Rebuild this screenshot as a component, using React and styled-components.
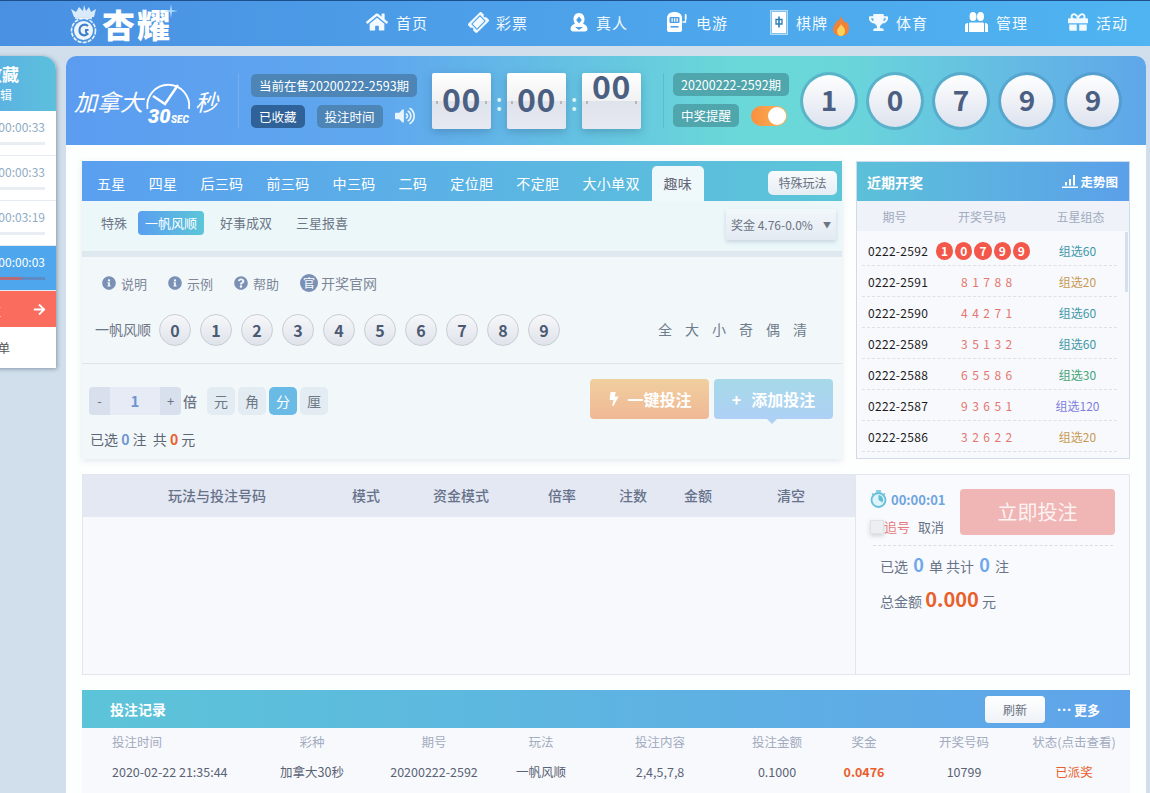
import styled, { createGlobalStyle } from "styled-components";
import { FaHome, FaTicketAlt, FaTrophy, FaGift, FaBolt, FaInfoCircle, FaQuestionCircle, FaVolumeUp, FaArrowRight } from "react-icons/fa";

const navItems = [
  { label: "首页", icon: <FaHome size={22} /> },
  { label: "彩票", icon: <FaTicketAlt size={19} style={{ transform: "rotate(-45deg)" }} /> },
  { label: "真人", icon: <DealerIcon /> },
  { label: "电游", icon: <SlotIcon /> },
  { label: "棋牌", icon: <TileIcon />, hot: true },
  { label: "体育", icon: <FaTrophy size={19} /> },
  { label: "管理", icon: <UsersIcon /> },
  { label: "活动", icon: <FaGift size={20} /> },
];

const playTabs = ["五星", "四星", "后三码", "前三码", "中三码", "二码", "定位胆", "不定胆", "大小单双"];
const openRows = [
  ["0222-2591", "8 1 7 8 8", "组选20", "#c89a55"],
  ["0222-2590", "4 4 2 7 1", "组选60", "#3f98a8"],
  ["0222-2589", "3 5 1 3 2", "组选60", "#3f98a8"],
  ["0222-2588", "6 5 5 8 6", "组选30", "#45a377"],
  ["0222-2587", "9 3 6 5 1", "组选120", "#7f7fdc"],
  ["0222-2586", "3 2 6 2 2", "组选20", "#c89a55"],
];
const betHead = ["玩法与投注号码", "模式", "资金模式", "倍率", "注数", "金额", "清空"];
const recordHead = ["投注时间", "彩种", "期号", "玩法", "投注内容", "投注金额", "奖金", "开奖号码", "状态(点击查看)"];

function DealerIcon() {
  return (
    <svg width="18" height="19" viewBox="0 0 18 19">
      <path d="M9 0c3.600 0 5.500 2.800 5.500 6 0 2-.6 3.600-1.500 4.800 2.500.8 4.500 2.600 4.500 5.200 0 1.500-1 2.500-2.500 2.500h-12C2 18.500 .5 17.500 .5 16c0-2.600 2-4.400 4.500-5.200C4.100 9.600 3.500 8 3.500 6 3.500 2.800 5.400 0 9 0z" fill="#fff" />
      <path d="M9 3.500 11.800 7 9 10.500 6.200 7z" fill="#4a9fe6" />
      <path d="M5 14h8l-4 3z" fill="#4a9fe6" />
    </svg>
  );
}

function SlotIcon() {
  return (
    <svg width="22" height="22" viewBox="0 0 22 22">
      <path d="M8.500 1C12.500 1 16 3 16 7v12c0 1.200-.8 2-2 2H3c-1.200 0-2-.8-2-2V7c0-4 3.500-6 7.500-6z" fill="#fff" />
      <rect x="3.500" y="6" width="10" height="6" rx="1" fill="#4a9fe6" />
      <path d="M5.500 7.200h1.300v3.500H5.500zM8 7.200h1.300v3.500H8zM10.500 7.200h1.300v3.500h-1.300z" fill="#fff" />
      <rect x="4.500" y="15" width="8" height="1.600" fill="#4a9fe6" />
      <rect x="18.800" y="3" width="1.800" height="6" rx=".9" fill="#fff" />
      <path d="M16.500 11h3v-2" fill="none" stroke="#fff" strokeWidth="1.300" />
    </svg>
  );
}

function TileIcon() {
  return (
    <svg width="18" height="25" viewBox="0 0 18 25">
      <rect x=".5" y=".5" width="17" height="24" fill="#7fc0ee" stroke="#b5dcf7" />
      <rect x="2" y="2" width="14" height="21" fill="#fff" />
      <path d="M6 9.500h6v4.500H6z" fill="none" stroke="#2d7fb8" strokeWidth="1.300" />
      <path d="M9 6.500v11" stroke="#2d7fb8" strokeWidth="1.600" />
    </svg>
  );
}

function FlameIcon() {
  return (
    <svg width="16" height="20" viewBox="0 0 16 20">
      <path d="M8 0c1 3 2 4 3.500 6 1 1.300 1.500 1 2-.5C15.500 8 16 10.500 16 13c0 4.500-3.500 7-8 7s-8-2.500-8-7c0-3 2-5 3.500-7C5.500 4 7.500 3 8 0z" fill="#f2813a" />
      <path d="M8 8c1 2 4 3.500 4 7 0 2.800-2 5-4 5s-4-2-4-5c0-2.500 3-4 4-7z" fill="#fbd35c" />
    </svg>
  );
}

function UsersIcon() {
  return (
    <svg width="23" height="20" viewBox="0 0 23 20" fill="#fff">
      <ellipse cx="8" cy="4.500" rx="3.500" ry="4.500" />
      <ellipse cx="15.500" cy="4.500" rx="3.500" ry="4.500" />
      <path d="M5.500 10.500h12c1 0 1.500.5 1.500 1.500v8H4v-8c0-1 .5-1.500 1.500-1.500z" />
      <path d="M0 20v-6c0-2 1-3 3-3v9zM23 20v-6c0-2-1-3-3-3v9z" />
    </svg>
  );
}

function Emblem() {
  return (
    <svg width="31" height="40" viewBox="0 0 31 40">
      <path d="M6 13 3 5l5 3 3-5 4 4 1-6 2 6 3-4 2 5 5-3-2 8z" fill="#d9ebf9" />
      <path d="M7 14h17" stroke="#fff" strokeWidth="1.500" />
      <circle cx="15.500" cy="26.500" r="12" fill="none" stroke="#eaf4fc" strokeWidth="1.600" strokeDasharray="4 1.200" />
      <circle cx="15.500" cy="26.500" r="9.500" fill="#eef6fc" />
      <path d="M20 22c-2.500-2.500-8-1.500-8.500 3.500S16 33 19.500 30c-1.500-1-2-2-1.500-4h2.500" fill="none" stroke="#3f7fca" strokeWidth="2" />
    </svg>
  );
}

function SparkIcon() {
  return (
    <svg width="14" height="14" viewBox="0 0 14 14" fill="#a6dafc">
      <path d="M7 0 8 6 14 7 8 8 7 14 6 8 0 7 6 6z" />
    </svg>
  );
}

function SpeedClock() {
  return (
    <svg width="50" height="50" viewBox="0 0 50 50">
      <path d="M3.500 33A21 21 0 1 1 45 33" fill="none" stroke="#fff" strokeWidth="1.800" />
      <path d="M9 20l12 8L34 9" fill="none" stroke="#fff" strokeWidth="2.400" />
      <text x="4" y="47" fill="#fff" fontSize="20" fontWeight="900" fontStyle="italic" fontFamily="Roboto, sans-serif">30</text>
      <text x="27" y="47" fill="#fff" fontSize="10" fontWeight="900" fontStyle="italic" fontFamily="Roboto, sans-serif">SEC</text>
    </svg>
  );
}

function TimerIcon() {
  return (
    <svg width="17" height="18" viewBox="0 0 17 18">
      <circle cx="8.500" cy="10" r="7" fill="#dff3f8" stroke="#64c0d8" strokeWidth="1.800" />
      <path d="M8.500 10V5a5 5 0 0 1 4 7.500z" fill="#64c0d8" />
      <path d="M6 1h5M2 3.500l2 1.500M15 3.500 13 5" stroke="#64c0d8" strokeWidth="1.500" />
    </svg>
  );
}

function TrendIcon() {
  return (
    <svg width="16" height="13" viewBox="0 0 16 13" fill="#fff">
      <path d="M0 11.500h16V13H0zM3 7h2v3.500H3zM7 4h2v6.500H7zM11 0h2v10.500h-2z" />
    </svg>
  );
}

const App = () => {
  return (
    <>
      <GlobalStyle />
      <Header>
        <Brand>
          <Emblem />
          <BrandText>杏耀</BrandText>
          <Spark><SparkIcon /></Spark>
        </Brand>
        <Nav>
          {navItems.map((item) => (
            <NavItem key={item.label}>
              {item.icon}
              <span>{item.label}</span>
              {item.hot && <Flame><FlameIcon /></Flame>}
            </NavItem>
          ))}
        </Nav>
      </Header>

      <Page>
        <Sidebar>
          <SideHead>
            <SideTitle>我的收藏</SideTitle>
            <SideSub>点击编辑</SideSub>
          </SideHead>
          <SideRow>
            <SideTime>00:00:33</SideTime>
            <SideBar />
          </SideRow>
          <SideRow>
            <SideTime>00:00:33</SideTime>
            <SideBar />
          </SideRow>
          <SideRow>
            <SideTime>00:03:19</SideTime>
            <SideBar />
          </SideRow>
          <SideRow $active>
            <SideTime $active>00:00:03</SideTime>
            <SideBar $active><i style={{ width: "78%" }} /></SideBar>
          </SideRow>
          <SideGo>
            <span>去投注</span>
            <FaArrowRight size={13} />
          </SideGo>
          <SideFoot>我的注单</SideFoot>
        </Sidebar>

        <Main>
          <Banner>
            <GameLogo>
              <GameName>加拿大</GameName>
              <SpeedClock />
              <GameName>秒</GameName>
            </GameLogo>
            <BannerCol>
              <Tag>当前在售20200222-2593期</Tag>
              <TagRow>
                <Tag $dark>已收藏</Tag>
                <Tag>投注时间</Tag>
                <FaVolumeUp size={20} color="#e8f4fb" />
              </TagRow>
            </BannerCol>
            <Flips>
              <FlipCard>00</FlipCard>
              <Colon>:</Colon>
              <FlipCard>00</FlipCard>
              <Colon>:</Colon>
              <FlipCard $up>00</FlipCard>
            </Flips>
            <BannerColRight>
              <Tag $teal>20200222-2592期</Tag>
              <TagRow>
                <Tag $teal>中奖提醒</Tag>
                <Toggle />
              </TagRow>
            </BannerColRight>
            <BigBalls>
              {[1, 0, 7, 9, 9].map((n, i) => (
                <BigBall key={i}>{n}</BigBall>
              ))}
            </BigBalls>
          </Banner>

          <Content>
            <TopRow>
              <PlayPanel>
                <TabBar>
                  {playTabs.map((t) => (
                    <Tab key={t}>{t}</Tab>
                  ))}
                  <ActiveTab>趣味</ActiveTab>
                  <SpecialBtn>特殊玩法</SpecialBtn>
                </TabBar>
                <SubBar>
                  <SubLabel>特殊</SubLabel>
                  <SubPill>一帆风顺</SubPill>
                  <SubItem>好事成双</SubItem>
                  <SubItem>三星报喜</SubItem>
                  <PrizeSelect>
                    <span>奖金 4.76-0.0%</span>
                    <small>▼</small>
                  </PrizeSelect>
                </SubBar>
                <PickArea>
                  <Links>
                    <LinkItem><FaInfoCircle size={14} />说明</LinkItem>
                    <LinkItem><FaInfoCircle size={14} />示例</LinkItem>
                    <LinkItem><FaQuestionCircle size={14} />帮助</LinkItem>
                    <LinkItem $tight><Guan>官</Guan>开奖官网</LinkItem>
                  </Links>
                  <NumberRow>
                    <RowLabel>一帆风顺</RowLabel>
                    <Balls>
                      {[0, 1, 2, 3, 4, 5, 6, 7, 8, 9].map((n) => (
                        <PickBall key={n}>{n}</PickBall>
                      ))}
                    </Balls>
                    <Quick>
                      {["全", "大", "小", "奇", "偶", "清"].map((q) => (
                        <span key={q}>{q}</span>
                      ))}
                    </Quick>
                  </NumberRow>
                </PickArea>
                <Controls>
                  <ControlLeft>
                    <StepRow>
                      <Stepper>
                        <StepBtn>-</StepBtn>
                        <StepValue>1</StepValue>
                        <StepBtn>+</StepBtn>
                      </Stepper>
                      <Times>倍</Times>
                      <Units>
                        {["元", "角", "分", "厘"].map((u) => (
                          <Unit key={u} $on={u === "分"}>{u}</Unit>
                        ))}
                      </Units>
                    </StepRow>
                    <Summary>已选 <b>0</b> 注&nbsp;&nbsp;共 <em>0</em> 元</Summary>
                  </ControlLeft>
                  <BigBtns>
                    <QuickBet><FaBolt size={14} />一键投注</QuickBet>
                    <AddBet><span>+</span>添加投注</AddBet>
                  </BigBtns>
                </Controls>
              </PlayPanel>

              <RecentPanel>
                <RecentHead>
                  <span>近期开奖</span>
                  <TrendLink><TrendIcon />走势图</TrendLink>
                </RecentHead>
                <RecentCols>
                  <span>期号</span>
                  <span>开奖号码</span>
                  <span>五星组态</span>
                </RecentCols>
                <RecentList>
                  <Scroll />
                  <RecentRow>
                    <Issue>0222-2592</Issue>
                    <RedBalls>
                      {[1, 0, 7, 9, 9].map((n, i) => (
                        <RedBall key={i}>{n}</RedBall>
                      ))}
                    </RedBalls>
                    <Kind $color="#3f98a8">组选60</Kind>
                  </RecentRow>
                  {openRows.map(([issue, nums, kind, color]) => (
                    <RecentRow key={issue}>
                      <Issue>{issue}</Issue>
                      <OpenNums>{nums}</OpenNums>
                      <Kind $color={color}>{kind}</Kind>
                    </RecentRow>
                  ))}
                </RecentList>
              </RecentPanel>
            </TopRow>

            <BetPanel>
              <BetList>
                <BetHead>
                  {betHead.map((h) => (
                    <span key={h}>{h}</span>
                  ))}
                </BetHead>
              </BetList>
              <BetSide>
                <SubmitRow>
                  <SubmitLeft>
                    <Countdown><TimerIcon />00:00:01</Countdown>
                    <ChaseRow>
                      <Check />
                      <Chase>追号</Chase>
                      <Cancel>取消</Cancel>
                    </ChaseRow>
                  </SubmitLeft>
                  <SubmitBtn>立即投注</SubmitBtn>
                </SubmitRow>
                <DashLine />
                <Totals>已选 <BlueNum>0</BlueNum> 单 共计 <BlueNum>0</BlueNum> 注</Totals>
                <Totals $gap>总金额 <Money>0.000</Money> 元</Totals>
              </BetSide>
            </BetPanel>

            <Records>
              <RecordHead>
                <span>投注记录</span>
                <RecordTools>
                  <Refresh>刷新</Refresh>
                  <More><i>···</i>更多</More>
                </RecordTools>
              </RecordHead>
              <RecordGrid $head>
                {recordHead.map((h) => (
                  <span key={h}>{h}</span>
                ))}
              </RecordGrid>
              <RecordGrid>
                <span>2020-02-22 21:35:44</span>
                <span>加拿大30秒</span>
                <span>20200222-2592</span>
                <span>一帆风顺</span>
                <span>2,4,5,7,8</span>
                <span>0.1000</span>
                <Prize>0.0476</Prize>
                <span>10799</span>
                <Paid>已派奖</Paid>
              </RecordGrid>
            </Records>
          </Content>
        </Main>
      </Page>
    </>
  );
};

const GlobalStyle = createGlobalStyle`
  html, body {
    margin: 0;
    height: 100%;
    overflow: hidden;
    background: #d0dfeb;
    font-family: "Noto Sans CJK SC", "Noto Sans", sans-serif;
  }
  * { box-sizing: border-box; }
`;

const Header = styled.header`
  height: 46px;
  border-top: 1px solid #1d4f8c;
  background: linear-gradient(90deg, #4a90e2, #4fb4f1);
  display: flex;
  align-items: center;
  color: #fff;
`;

const Brand = styled.div`
  position: relative;
  margin-left: 68px;
  display: flex;
  align-items: center;
  gap: 3px;
`;

const BrandText = styled.div`
  font-size: 33px;
  line-height: 40px;
  font-weight: 900;
  letter-spacing: 2px;
`;

const Spark = styled.span`
  position: absolute;
  right: -6px;
  top: 0;
  line-height: 0;
`;

const Nav = styled.nav`
  margin-left: auto;
  padding-right: 23px;
  display: flex;
`;

const NavItem = styled.div`
  position: relative;
  width: 100px;
  padding-bottom: 3px;
  display: flex;
  justify-content: flex-end;
  align-items: center;
  gap: 8px;
  font-size: 15px;
  color: #f2f9ff;
  span { letter-spacing: 1px; margin-right: -1px; }
`;

const Flame = styled.span`
  position: absolute;
  right: -21px;
  top: 6px;
`;

const Page = styled.div`
  display: flex;
  align-items: flex-start;
  margin-left: -64px;
  padding-top: 10px;
`;

const Sidebar = styled.aside`
  width: 120px;
  flex: none;
  background: #fff;
  border-radius: 0 14px 0 0;
  box-shadow: 1px 1px 4px rgba(60, 80, 110, .5);
`;

const SideHead = styled.div`
  height: 55px;
  padding: 7px 37px 0 0;
  border-radius: 0 14px 0 0;
  background: linear-gradient(90deg, #5ba4e8, #5cc0dc);
  color: #fff;
  text-align: right;
`;

const SideTitle = styled.div`
  font-size: 17px;
  line-height: 22px;
  font-weight: 700;
`;

const SideSub = styled.div`
  font-size: 12px;
  line-height: 20px;
  margin-right: 7px;
`;

const SideRow = styled.div`
  height: 45px;
  padding: 7px 11px 0 0;
  border-bottom: 1px solid #e6ebf1;
  background: ${(p) => (p.$active ? "#4ea6ec" : "#fff")};
`;

const SideTime = styled.div`
  font-size: 12px;
  line-height: 18px;
  text-align: right;
  color: ${(p) => (p.$active ? "#fff" : "#8fabc4")};
`;

const SideBar = styled.div`
  margin-top: 6px;
  height: 3px;
  background: ${(p) => (p.$active ? "#5d8cc4" : "#e8eef4")};
  i { display: block; height: 100%; background: #ba6a74; }
`;

const SideGo = styled.div`
  height: 36px;
  padding: 0 10px 0 26px;
  display: flex;
  align-items: center;
  justify-content: space-between;
  background: #fa6c5e;
  color: #fff;
  font-size: 13px;
`;

const SideFoot = styled.div`
  height: 41px;
  padding-right: 46px;
  display: flex;
  align-items: center;
  justify-content: flex-end;
  font-size: 12px;
  color: #555;
`;

const Main = styled.main`
  width: 1080px;
  flex: none;
  margin-left: 10px;
  min-height: 760px;
  background: #fdfefe;
  border-radius: 10px 10px 0 0;
`;

const Banner = styled.section`
  height: 89px;
  border-radius: 10px 10px 0 0;
  background: linear-gradient(90deg, #5b9cf0 0%, #5fa8ee 30%, #6ad8d8 62%, #6ad6da 72%, #5fa6ea 100%);
  display: flex;
  align-items: center;
  color: #fff;
`;

const GameLogo = styled.div`
  width: 173px;
  height: 55px;
  padding-left: 8px;
  display: flex;
  align-items: center;
  border-right: 1px solid rgba(255, 255, 255, .15);
  svg { margin: 0 1px 0 1px; }
`;

const GameName = styled.span`
  font-size: 23px;
  font-style: italic;
  font-weight: 400;
  white-space: nowrap;
`;

const BannerCol = styled.div`
  margin-left: 12px;
  width: 181px;
  display: flex;
  flex-direction: column;
  gap: 8px;
`;

const BannerColRight = styled(BannerCol)`
  margin-left: 22px;
  padding-left: 9px;
  width: 124px;
  height: 55px;
  border-left: 1px solid rgba(60, 150, 170, .3);
`;

const TagRow = styled.div`
  display: flex;
  align-items: center;
  gap: 12px;
`;

const Tag = styled.div`
  height: 23px;
  padding: 0 8px;
  border-radius: 5px;
  font-size: 12.5px;
  line-height: 23px;
  white-space: nowrap;
  width: fit-content;
  background: ${(p) => (p.$dark ? "#2e6298" : p.$teal ? "#4fa6ad" : "#4c85b6")};
`;

const Toggle = styled.div`
  position: relative;
  width: 36px;
  height: 20px;
  border-radius: 10px;
  background: linear-gradient(90deg, #fb8f3e, #f7b65a);
  &::after {
    content: "";
    position: absolute;
    right: 1px;
    top: 1px;
    width: 18px;
    height: 18px;
    border-radius: 50%;
    background: #fff;
  }
`;

const Flips = styled.div`
  display: flex;
  align-items: center;
`;

const FlipCard = styled.div`
  position: relative;
  width: 59px;
  height: 56px;
  border-radius: 2px;
  background: linear-gradient(#fff 0, #f1f1f3 50%, #dfe3ec 50%, #e7e9f2 100%);
  box-shadow: 0 3px 8px rgba(50, 90, 130, .35);
  color: #4b5f82;
  font-size: 32px;
  font-weight: 700;
  text-align: center;
  letter-spacing: .5px;
  line-height: ${(p) => (p.$up ? "25px" : "51px")};
  &::after {
    content: "";
    position: absolute;
    left: 4px;
    right: 4px;
    top: 28px;
    height: 3px;
    border-left: 2px solid #b8b8b8;
    border-right: 2px solid #b8b8b8;
  }
`;

const Colon = styled.div`
  width: 16px;
  text-align: center;
  font-size: 24px;
  font-weight: 500;
  line-height: 24px;
  color: #dff6f8;
`;

const BigBalls = styled.div`
  margin-left: 13px;
  display: flex;
  gap: 8px;
`;

const BigBall = styled.div`
  width: 58px;
  height: 58px;
  padding-bottom: 4px;
  border-radius: 50%;
  border: 3px solid rgba(70, 140, 180, .45);
  background: linear-gradient(#fff, #dde2ee);
  background-clip: padding-box;
  display: flex;
  align-items: center;
  justify-content: center;
  font-size: 28px;
  font-weight: 700;
  color: #4b5f82;
`;

const Content = styled.div`
  padding: 16px 16px 0;
`;

const TopRow = styled.div`
  display: flex;
  gap: 14px;
  align-items: flex-start;
`;

const PlayPanel = styled.section`
  width: 760px;
  height: 298px;
  background: #f2f7fa;
  box-shadow: 0 2px 6px rgba(150, 170, 190, .25);
`;

const TabBar = styled.div`
  height: 40px;
  padding-left: 15px;
  display: flex;
  align-items: flex-end;
  gap: 23px;
  position: relative;
  background: linear-gradient(90deg, #5a9ff0, #5cc6d8);
`;

const Tab = styled.div`
  height: 35px;
  color: #fff;
  font-size: 14px;
  line-height: 34px;
  letter-spacing: .35px;
`;

const ActiveTab = styled(Tab)`
  width: 52px;
  margin-left: -11px;
  border-radius: 5px 5px 0 0;
  background: #eff8fa;
  color: #667;
  text-align: center;
`;

const SpecialBtn = styled.div`
  position: absolute;
  right: 5px;
  top: 10px;
  width: 69px;
  height: 24px;
  border-radius: 5px;
  background: linear-gradient(#f8fbfd, #e6eef4);
  color: #68707f;
  font-size: 12px;
  line-height: 24px;
  text-align: center;
`;

const SubBar = styled.div`
  height: 50px;
  padding: 10px 6px 0 19px;
  display: flex;
  align-items: flex-start;
  background: #ecf7fa;
  font-size: 13px;
  color: #6c7686;
  line-height: 24px;
`;

const SubLabel = styled.div`
  margin-right: 11px;
`;

const SubPill = styled.div`
  width: 66px;
  height: 24px;
  margin-right: 16px;
  border-radius: 4px;
  background: linear-gradient(90deg, #5a9ff0, #5cc6d8);
  color: #fff;
  text-align: center;
`;

const SubItem = styled.div`
  margin-right: 24px;
`;

const PrizeSelect = styled.div`
  margin-left: auto;
  margin-top: -2px;
  width: 110px;
  height: 31px;
  padding: 0 5px;
  display: flex;
  align-items: center;
  justify-content: space-between;
  font-size: 12px;
  color: #6a7484;
  background: linear-gradient(#f1f7fa, #e4eaf2);
  box-shadow: 0 2px 4px rgba(130, 150, 170, .35);
  small { font-size: 8px; }
`;

const PickArea = styled.div`
  height: 113px;
  padding: 15px 0 0 13px;
  border-top: 6px solid #dfe7ef;
  border-bottom: 1px solid #dfe6ea;
`;

const Links = styled.div`
  padding-left: 7px;
  height: 22px;
  display: flex;
  gap: 21px;
`;

const LinkItem = styled.div`
  display: flex;
  align-items: center;
  gap: ${(p) => (p.$tight ? "3px" : "5px")};
  font-size: ${(p) => (p.$tight ? "14px" : "13px")};
  color: #7d8798;
  svg { color: #7a90b5; }
`;

const Guan = styled.span`
  width: 18px;
  height: 18px;
  border-radius: 50%;
  background: #7a90b5;
  color: #fff;
  font-size: 12px;
  line-height: 18px;
  text-align: center;
`;

const NumberRow = styled.div`
  margin-top: 20px;
  display: flex;
  align-items: center;
`;

const RowLabel = styled.div`
  width: 64px;
  font-size: 14px;
  margin-top: -3px;
  color: #6c7686;
`;

const Balls = styled.div`
  display: flex;
  gap: 9px;
`;

const PickBall = styled.div`
  width: 32px;
  height: 32px;
  border-radius: 50%;
  border: 1px solid #c9ced6;
  background: linear-gradient(#f6f7f9, #dfe3ea);
  display: flex;
  align-items: center;
  justify-content: center;
  font-size: 16px;
  font-weight: 700;
  color: #4b5a73;
`;

const Quick = styled.div`
  margin: -2px 0 0 98px;
  display: flex;
  gap: 13px;
  font-size: 14px;
  color: #6f7c8c;
`;

const Controls = styled.div`
  height: 96px;
  padding: 15px 9px 0 7px;
  display: flex;
  justify-content: space-between;
`;

const ControlLeft = styled.div`
  padding-top: 8px;
`;

const StepRow = styled.div`
  display: flex;
  align-items: center;
  height: 28px;
`;

const Stepper = styled.div`
  width: 92px;
  height: 28px;
  display: flex;
  border-radius: 4px;
  overflow: hidden;
  background: #d8dfed;
`;

const StepBtn = styled.div`
  width: 21px;
  text-align: center;
  font-size: 13px;
  line-height: 28px;
  color: #6a7484;
`;

const StepValue = styled.div`
  flex: 1;
  background: #e6ebf6;
  text-align: center;
  font-size: 15px;
  font-weight: 700;
  line-height: 28px;
  color: #6f96d0;
`;

const Times = styled.div`
  margin: 0 10px 0 2px;
  font-size: 14px;
  font-weight: 500;
  color: #6a7484;
`;

const Units = styled.div`
  display: flex;
  gap: 3px;
`;

const Unit = styled.div`
  width: 28px;
  height: 28px;
  border-radius: 5px;
  background: ${(p) => (p.$on ? "#69bbe6" : "#e3ebf3")};
  color: ${(p) => (p.$on ? "#fff" : "#6f7986")};
  font-size: 14px;
  line-height: 28px;
  text-align: center;
`;

const Summary = styled.div`
  margin-top: 14px;
  padding-left: 1px;
  font-size: 14px;
  color: #5d6675;
  b { color: #6f96d0; font-weight: 700; }
  em { color: #e8602c; font-style: normal; font-weight: 700; }
`;

const BigBtns = styled.div`
  display: flex;
  gap: 5px;
`;

const BigBtn = styled.div`
  position: relative;
  width: 119px;
  height: 40px;
  border-radius: 4px;
  display: flex;
  align-items: center;
  justify-content: center;
  gap: 6px;
  color: #fff;
  font-size: 16px;
  font-weight: 700;
`;

const QuickBet = styled(BigBtn)`
  background: linear-gradient(#f0cf9e, #f0b896);
`;

const AddBet = styled(BigBtn)`
  gap: 10px;
  background: linear-gradient(#a6d9e8, #aed0f5);
  &::after {
    content: "";
    position: absolute;
    left: 53px;
    bottom: -5px;
    border: 5px solid transparent;
    border-bottom: 0;
    border-top-color: #aed0f5;
  }
`;

const RecentPanel = styled.aside`
  width: 274px;
  height: 298px;
  border: 1px solid #cfdbe8;
  background: #f8f9fc;
  overflow: hidden;
`;

const RecentHead = styled.div`
  height: 39px;
  padding: 0 11px 0 10px;
  display: flex;
  align-items: center;
  justify-content: space-between;
  background: linear-gradient(90deg, #5cc0d8, #5ba0ea);
  color: #fff;
  font-size: 14px;
  font-weight: 700;
`;

const TrendLink = styled.div`
  display: flex;
  align-items: center;
  gap: 2px;
  font-size: 12.5px;
`;

const RecentCols = styled.div`
  height: 30px;
  display: grid;
  grid-template-columns: 75px 100px 1fr;
  align-items: center;
  text-align: center;
  background: #eff2f8;
  color: #a2abbf;
  font-size: 12px;
`;

const RecentList = styled.div`
  position: relative;
  padding: 4px 12px 0 5px;
`;

const Scroll = styled.div`
  position: absolute;
  right: 1px;
  top: 1px;
  width: 3px;
  height: 60px;
  background: #d6e0ec;
`;

const RecentRow = styled.div`
  height: 31px;
  padding: 1px 0 0 6px;
  display: flex;
  align-items: center;
  border-bottom: 1px dashed #dce1ea;
`;

const Issue = styled.div`
  width: 68px;
  font-size: 12px;
  letter-spacing: .3px;
  color: #1c1c1c;
`;

const RedBalls = styled.div`
  width: 94px;
  display: flex;
  gap: 2px;
`;

const RedBall = styled.div`
  width: 18px;
  height: 18px;
  border-radius: 50%;
  background: #f2574a;
  color: #fff;
  font-size: 12px;
  font-weight: 700;
  line-height: 18px;
  text-align: center;
`;

const OpenNums = styled.div`
  width: 94px;
  padding-left: 25px;
  font-size: 12px;
  letter-spacing: .9px;
  color: #e5756e;
  white-space: pre;
`;

const Kind = styled.div`
  flex: 1;
  padding-left: 8px;
  text-align: center;
  font-size: 12px;
  color: ${(p) => p.$color};
`;

const BetPanel = styled.section`
  margin-top: 15px;
  height: 201px;
  display: flex;
  border: 1px solid #e2e7ef;
`;

const BetList = styled.div`
  width: 773px;
  background: #f8f9fc;
  border-right: 1px solid #e2e7ef;
`;

const BetHead = styled.div`
  height: 42px;
  padding: 0 0 2px 20px;
  display: grid;
  grid-template-columns: 228px 70px 120px 82px 60px 70px 116px;
  align-items: center;
  text-align: center;
  background: #e4e8f3;
  font-size: 14px;
  font-weight: 500;
  color: #66718a;
`;

const BetSide = styled.div`
  flex: 1;
  padding: 14px 14px 0 14px;
  background: #f9fafe;
`;

const SubmitRow = styled.div`
  height: 46px;
  display: flex;
  justify-content: space-between;
`;

const SubmitLeft = styled.div``;

const Countdown = styled.div`
  height: 20px;
  display: flex;
  align-items: center;
  gap: 4px;
  font-size: 13px;
  font-weight: 700;
  color: #6fa5e0;
`;

const ChaseRow = styled.div`
  margin-top: 8px;
  display: flex;
  align-items: center;
  font-size: 13px;
  line-height: 20px;
`;

const Check = styled.div`
  width: 14px;
  height: 14px;
  border: 1px solid #dfe2e8;
  background: #eceef0;
  box-shadow: 0 2px 4px rgba(120, 120, 120, .3);
`;

const Chase = styled.span`
  margin-right: 8px;
  color: #e57b7b;
`;

const Cancel = styled.span`
  color: #667084;
`;

const SubmitBtn = styled.div`
  width: 155px;
  height: 46px;
  border-radius: 4px;
  background: #f0b5b5;
  color: #fdf3f3;
  font-size: 20px;
  line-height: 46px;
  text-align: center;
`;

const DashLine = styled.div`
  margin: 10px 2px 0 3px;
  border-top: 1px dashed #d8dde6;
`;

const Totals = styled.div`
  margin-top: ${(p) => (p.$gap ? "13px" : "7px")};
  padding-left: 10px;
  height: 22px;
  font-size: 14px;
  line-height: 22px;
  color: #687488;
`;

const BlueNum = styled.b`
  font-size: 18px;
  line-height: 22px;
  color: #6fa8ec;
  margin: 0 2px;
`;

const Money = styled.b`
  font-size: 20px;
  line-height: 22px;
  color: #e8602c;
`;

const Records = styled.section`
  margin-top: 15px;
  min-height: 130px;
  background: #f8f9fc;
`;

const RecordHead = styled.div`
  height: 38px;
  padding: 0 30px 0 28px;
  display: flex;
  align-items: center;
  justify-content: space-between;
  background: linear-gradient(90deg, #5cc4d8, #5fa4ea);
  color: #fff;
  font-size: 14px;
  font-weight: 700;
`;

const RecordTools = styled.div`
  display: flex;
  align-items: center;
  gap: 12px;
`;

const Refresh = styled.div`
  width: 60px;
  height: 27px;
  border-radius: 4px;
  background: linear-gradient(#fff, #eef2f7);
  color: #68707f;
  font-size: 12px;
  font-weight: 400;
  line-height: 27px;
  text-align: center;
`;

const More = styled.div`
  display: flex;
  align-items: center;
  gap: 2px;
  font-size: 13px;
  i {
    font-family: "Liberation Sans", sans-serif;
    font-style: normal;
    font-size: 15px;
    letter-spacing: 0;
  }
`;

const RecordGrid = styled.div`
  height: ${(p) => (p.$head ? "28px" : "32px")};
  padding: 0 4px 2px 30px;
  display: grid;
  grid-template-columns: 138px 124px 120px 94px 144px 90px 84px 116px 104px;
  align-items: center;
  text-align: center;
  font-size: 12.5px;
  color: ${(p) => (p.$head ? "#a2abbf" : "#5a6375")};
  span { white-space: nowrap; }
  span:first-child { text-align: left; }
`;

const Prize = styled.b`
  color: #e8602c;
`;

const Paid = styled.span`
  color: #e8602c;
`;

export default App;
